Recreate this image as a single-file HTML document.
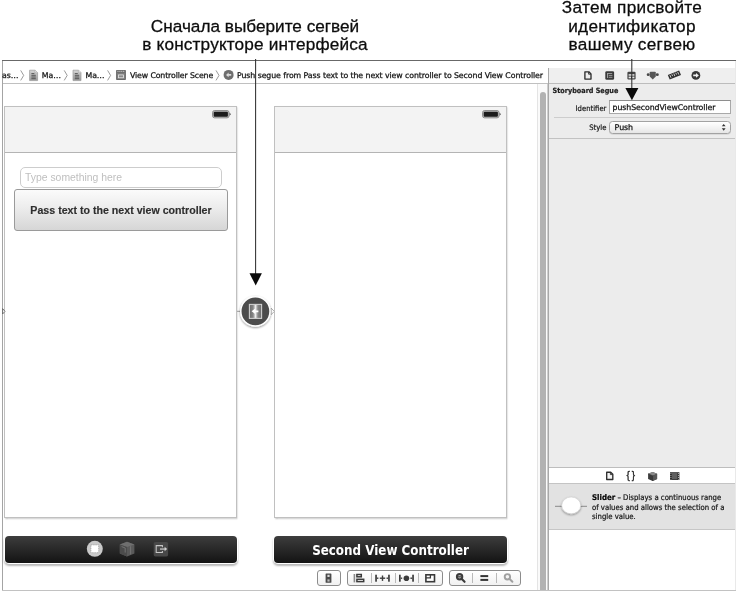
<!DOCTYPE html>
<html lang="ru">
<head>
<meta charset="utf-8">
<title>Storyboard Segue</title>
<style>
html,body{margin:0;padding:0;background:#fff;}
#root{position:absolute;left:0;top:0;width:736px;height:592px;will-change:transform;}
body{width:736px;height:592px;position:relative;overflow:hidden;font-family:"DejaVu Sans Condensed","Liberation Sans",sans-serif;color:#111;}
.abs{position:absolute;}
.cap{position:absolute;font-family:"Liberation Sans",sans-serif;font-size:17.2px;line-height:18.2px;text-align:center;color:#0c0c0c;-webkit-text-stroke:0.28px #0c0c0c;white-space:nowrap;}
.ui{font-family:"DejaVu Sans","Liberation Sans",sans-serif;font-size:7.8px;letter-spacing:-0.07px;white-space:nowrap;color:#111;-webkit-text-stroke:0.25px #111;}
.vc{position:absolute;top:106px;width:231px;height:410px;background:#fff;border:1px solid #c0c0c0;box-shadow:0.5px 1px 1.5px rgba(0,0,0,.24);}
.vc .nav{position:absolute;left:0;top:0;right:0;height:45px;background:#f3f3f3;border-bottom:1px solid #b4b4b4;}
.dock{position:absolute;top:536px;height:27px;width:233px;border-radius:4px;background:linear-gradient(#3d3d3d,#131313);box-shadow:0 0 0 1px #fff,0 2px 2px 1px rgba(0,0,0,.28);}
.bc{position:absolute;top:64.7px;height:22px;line-height:22px;}

.tf{left:15px;top:60px;width:196px;height:19px;border:1px solid #cdcdcd;border-radius:5px;background:#fff;font-family:"Liberation Sans",sans-serif;font-size:10.4px;line-height:19px;color:#bfbfbf;padding-left:4px;box-sizing:content-box;white-space:nowrap;}
.btn{left:9px;top:82px;width:212px;height:40px;border:1px solid #9a9a9a;border-radius:3px;background:linear-gradient(#fbfbfb,#ececec 45%,#d6d6d6);font-family:"Liberation Sans",sans-serif;font-weight:bold;font-size:10.64px;line-height:40.6px;color:#2e2e2e;-webkit-text-stroke:0.15px #2e2e2e;text-align:center;white-space:nowrap;}
.docktitle{position:absolute;left:0;right:0;top:0;height:27px;line-height:29.6px;text-align:center;color:#fff;font-weight:bold;font-size:13.25px;font-family:"DejaVu Sans Condensed","Liberation Sans",sans-serif;white-space:nowrap;}
.seg{position:absolute;top:570px;height:13.6px;border:1px solid #8c8c8c;border-radius:3px;background:linear-gradient(#ffffff,#f1f1f1);}
.lbl{position:absolute;font-family:"DejaVu Sans Condensed","Liberation Sans",sans-serif;font-size:7.6px;line-height:10px;white-space:nowrap;color:#1a1a1a;-webkit-text-stroke:0.2px #1a1a1a;}
</style>
</head>
<body>
<div id="root">

<!-- captions -->
<div class="cap" style="left:105px;width:300px;top:17.2px;">Сначала выберите сегвей<br><span style="letter-spacing:0.16px;">в конструкторе интерфейса</span></div>
<div class="cap" style="left:482px;width:300px;top:-1.6px;letter-spacing:0.3px;">Затем присвойте<br>идентификатор<br>вашему сегвею</div>

<!-- window frame -->
<div class="abs" style="left:2px;top:60px;width:734px;height:1px;background:#686868;"></div>
<div class="abs" style="left:2px;top:61px;width:1px;height:530px;background:#a4a4a4;"></div>
<div class="abs" style="left:2px;top:590px;width:734px;height:1px;background:#c2c2c2;z-index:6;"></div>
<div class="abs" style="left:735px;top:61px;width:1px;height:530px;background:#e9e9e9;z-index:5;"></div>

<!-- breadcrumb bar -->
<div class="abs" style="left:3px;top:83px;width:545px;height:1px;background:#c0c0c0;"></div>
<div id="crumbs">
<span class="ui bc" style="left:2px;">as…</span>
<span class="ui bc" style="left:41.8px;">Ma…</span>
<span class="ui bc" style="left:85.5px;">Ma…</span>
<span class="ui bc" style="left:130px;letter-spacing:-0.12px;">View Controller Scene</span>
<span class="ui bc" style="left:237px;">Push segue from Pass text to the next view controller to Second View Controller</span>
<svg class="abs" style="left:0;top:61px;" width="240" height="22" viewBox="0 0 240 22">
  <defs>
    <linearGradient id="dg" x1="0" x2="0" y1="0" y2="1"><stop offset="0" stop-color="#d6d6d6"/><stop offset="1" stop-color="#9a9a9a"/></linearGradient>
  </defs>
  <g transform="translate(20.7 9.4)"><path d="M0 0 L3 5 L0 10" fill="none" stroke="#8e8e8e" stroke-width="0.9"/></g>
  <g transform="translate(29.2 8.8)"><path d="M0.4 0.4 H6 L8.4 2.8 V10.8 H0.4 Z" fill="url(#dg)" stroke="#9a9a9a" stroke-width="0.7"/>
      <path d="M5.8 0.5 V3 H8.3" fill="#ececec" stroke="#9a9a9a" stroke-width="0.5"/>
      <path d="M2.2 3.8 H5.2 M2.2 5.5 H6.6 M2.2 7.2 H6.6 M2.2 8.9 H6.6" stroke="#444" stroke-width="0.85"/></g>
  <g transform="translate(64.2 9.4)"><path d="M0 0 L3 5 L0 10" fill="none" stroke="#8e8e8e" stroke-width="0.9"/></g>
  <g transform="translate(72.6 8.8)"><path d="M0.4 0.4 H6 L8.4 2.8 V10.8 H0.4 Z" fill="url(#dg)" stroke="#9a9a9a" stroke-width="0.7"/>
      <path d="M5.8 0.5 V3 H8.3" fill="#ececec" stroke="#9a9a9a" stroke-width="0.5"/>
      <path d="M2.2 3.8 H5.2 M2.2 5.5 H6.6 M2.2 7.2 H6.6 M2.2 8.9 H6.6" stroke="#444" stroke-width="0.85"/></g>
  <g transform="translate(107.6 9.4)"><path d="M0 0 L3 5 L0 10" fill="none" stroke="#8e8e8e" stroke-width="0.9"/></g>
  <!-- scene icon -->
  <rect x="116.1" y="8.9" width="9.8" height="10" rx="0.7" fill="#666"/>
  <rect x="117" y="11.6" width="8" height="6.5" fill="#7c7c7c"/>
  <rect x="118.5" y="13.9" width="5" height="2.9" fill="#8a8a8a" stroke="#e6e6e6" stroke-width="0.8"/>
  <path d="M117.4 10.3 H124.8" stroke="#e0e0e0" stroke-width="0.9" stroke-dasharray="1.2 0.7"/>
  <g transform="translate(216 9.4)"><path d="M0 0 L3 5 L0 10" fill="none" stroke="#8e8e8e" stroke-width="0.9"/></g>
  <!-- segue icon -->
  <circle cx="228.6" cy="13.9" r="5" fill="#6f6f6f"/>
  <path d="M226 13.9 L228.6 11.6 V13.1 H231.2 V14.7 H228.6 V16.2 Z" fill="#dcdcdc"/>
</svg>
</div>

<!-- canvas scrollbar -->
<div class="abs" style="left:537px;top:84px;width:11px;height:506px;background:#fafafa;border-left:1px solid #e4e4e4;border-right:1px solid #cfcfcf;box-sizing:border-box;"></div>
<div class="abs" style="left:540px;top:92px;width:6px;height:498px;border-radius:3px 3px 0 0;background:#b2b2b2;"></div>

<!-- view controllers -->
<div class="vc" style="left:4px;">
  <div class="nav"></div>
  <svg class="abs" style="left:207px;top:3px;" width="20" height="10" viewBox="0 0 20 10"><rect x="0.55" y="0.55" width="16.5" height="7.3" rx="2" fill="#bdbdbd" stroke="#8c8c8c" stroke-width="1"/><rect x="1.7" y="1.7" width="14.2" height="5" rx="1" fill="#1c1c1c"/><path d="M17.5 2.6 L19 4.2 L17.5 5.8 Z" fill="#5c5c5c"/></svg>
  <div class="abs tf">Type something here</div>
  <div class="abs btn">Pass text to the next view controller</div>
</div>
<div class="vc" style="left:274px;">
  <div class="nav"></div>
  <svg class="abs" style="left:207px;top:3px;" width="20" height="10" viewBox="0 0 20 10"><rect x="0.55" y="0.55" width="16.5" height="7.3" rx="2" fill="#bdbdbd" stroke="#8c8c8c" stroke-width="1"/><rect x="1.7" y="1.7" width="14.2" height="5" rx="1" fill="#1c1c1c"/><path d="M17.5 2.6 L19 4.2 L17.5 5.8 Z" fill="#5c5c5c"/></svg>
</div>

<!-- docks -->
<div class="dock" style="left:5px;width:232px;">
  <svg class="abs" style="left:77px;top:2px;" width="92" height="23" viewBox="0 0 92 23">
    <!-- first responder / view controller icon -->
    <circle cx="12.8" cy="10.8" r="8" fill="#c9c9c9"/>
    <rect x="8.9" y="6.9" width="7.8" height="7.8" fill="#fff" stroke="#8d8d8d" stroke-width="0.7" stroke-dasharray="1 0.8"/>
    <!-- cube -->
    <path d="M45 3.8 L52.4 6.4 L52.4 15.6 L45 18.6 L37.8 15.6 L37.8 6.4 Z" fill="#5a5a5a"/>
    <path d="M45 3.8 L52.4 6.4 L45 9 L37.8 6.4 Z" fill="#6f6f6f"/>
    <path d="M45 9 L45 18.6 L37.8 15.6 L37.8 6.4 Z" fill="#4b4b4b"/>
    <path d="M39.6 8.6 L43.2 10 L43.2 14.6" fill="none" stroke="#777" stroke-width="0.9"/>
    <path d="M48.6 8.2 L48.6 16.4" stroke="#777" stroke-width="0.9"/>
    <!-- exit -->
    <rect x="71.7" y="3.9" width="14.4" height="14.5" rx="1.6" fill="#484848"/>
    <path d="M80.4 9.2 V7.6 H74.2 V14.5 H80.4 V12.9" fill="none" stroke="#c6c6c6" stroke-width="1.05"/>
    <path d="M78 11.05 H83.2" stroke="#d2d2d2" stroke-width="1.2"/>
    <path d="M82.6 8.8 L85.1 11.05 L82.6 13.3 Z" fill="#d2d2d2"/>
  </svg>
</div>
<div class="dock" style="left:274px;"><div class="docktitle">Second View Controller</div></div>

<!-- entry arrow stub -->
<svg class="abs" style="left:0;top:304px;" width="8" height="14" viewBox="0 0 8 14"><path d="M2.6 4.6 L5 7.3 L2.6 10 Z" fill="#fff" stroke="#555" stroke-width="0.8"/></svg>

<!-- segue -->
<svg class="abs" style="left:230px;top:290px;" width="52" height="44" viewBox="0 0 52 44">
  <defs>
    <linearGradient id="sg" x1="0" x2="1" y1="0" y2="0"><stop offset="0" stop-color="#6c6c6c"/><stop offset="0.3" stop-color="#858585"/><stop offset="0.5" stop-color="#ededed"/><stop offset="0.7" stop-color="#858585"/><stop offset="1" stop-color="#6c6c6c"/></linearGradient>
    <filter id="sh" x="-30%" y="-30%" width="160%" height="170%"><feGaussianBlur in="SourceAlpha" stdDeviation="1.2"/><feOffset dy="1.2"/><feComponentTransfer><feFuncA type="linear" slope="0.45"/></feComponentTransfer><feMerge><feMergeNode/><feMergeNode in="SourceGraphic"/></feMerge></filter>
  </defs>
  <path d="M7 21.3 H10.5" stroke="#9a9a9a" stroke-width="1"/>
  <path d="M41 18 L44.4 21.4 L41 24.8 Z" fill="#fff" stroke="#a8a8a8" stroke-width="0.9"/>
  <circle cx="25.4" cy="21.4" r="14.6" fill="#4b4b4b" stroke="#fff" stroke-width="1.5" filter="url(#sh)"/>
  <rect x="19.4" y="14.4" width="12.2" height="14" fill="url(#sg)" stroke="#cfcfcf" stroke-width="1.1"/>
  <path d="M21.6 21.3 L25.2 18.6 V20.4 H28.4 V22.2 H25.2 V24 Z" fill="#fff"/>
</svg>

<!-- canvas bottom toolbar -->
<div class="seg" style="left:317px;width:22px;"></div>
<div class="seg" style="left:347px;width:94px;"></div>
<div class="seg" style="left:449px;width:70px;"></div>
<svg class="abs" style="left:310px;top:566px;" width="220" height="24" viewBox="0 0 220 24">
  <g fill="#3c3c3c" stroke="none">
    <!-- btn1 -->
    <rect x="15.6" y="7.4" width="5.8" height="9.4" rx="0.6" fill="#4a4a4a"/>
    <rect x="17.4" y="8.8" width="2.2" height="2.2" fill="#d8d8d8"/>
    <rect x="17.4" y="13.4" width="2.2" height="2.2" fill="#bdbdbd"/>
    <!-- align -->
    <rect x="43.6" y="8" width="1.6" height="8.4" fill="#8a8a8a"/>
    <rect x="46.9" y="8.5" width="4.4" height="2.3" fill="#fff" stroke="#3a3a3a" stroke-width="1.5"/>
    <rect x="46.9" y="13.3" width="6.8" height="2.3" fill="#fff" stroke="#3a3a3a" stroke-width="1.5"/>
    <!-- pin -->
    <rect x="65.2" y="8.7" width="1.7" height="7"/>
    <rect x="66.9" y="11.5" width="1.5" height="1.4"/>
    <rect x="78.1" y="8.7" width="1.7" height="7"/>
    <rect x="76.5" y="11.5" width="1.6" height="1.4"/>
    <rect x="69.8" y="11.5" width="5.4" height="1.4"/>
    <rect x="71.8" y="9.5" width="1.4" height="5.4"/>
    <!-- resolve -->
    <rect x="89" y="8.7" width="1.7" height="7"/>
    <rect x="90.7" y="11.5" width="1.5" height="1.4"/>
    <rect x="102.2" y="8.7" width="1.7" height="7"/>
    <rect x="100.4" y="11.5" width="1.8" height="1.4"/>
    <circle cx="96.4" cy="12.2" r="2.8"/>
    <!-- resize -->
    <rect x="115.9" y="8.8" width="8.6" height="6.9" fill="#fff" stroke="#3a3a3a" stroke-width="1.6"/>
    <path d="M115.9 11.9 H120.4 V8.8" fill="none" stroke="#3a3a3a" stroke-width="1.3"/>
  </g>
  <!-- dividers -->
  <g stroke="#b9b9b9" stroke-width="1">
    <path d="M61.5 7 V17"/><path d="M85.5 7 V17"/><path d="M108.5 7 V17"/>
    <path d="M162.5 7 V17"/><path d="M186.5 7 V17"/>
  </g>
  <!-- zoom out -->
  <circle cx="149.6" cy="10.8" r="2.7" fill="#b4b4b4" stroke="#3c3c3c" stroke-width="2"/>
  <path d="M151.8 13 L154.6 15.8" stroke="#3c3c3c" stroke-width="2.1" stroke-linecap="round"/>
  <path d="M148 10.8 H151.2" stroke="#3c3c3c" stroke-width="1"/>
  <!-- equals -->
  <rect x="170.4" y="9.1" width="7.8" height="2" fill="#333"/>
  <rect x="170.4" y="12.9" width="7.8" height="2" fill="#333"/>
  <!-- zoom in (disabled) -->
  <circle cx="197.4" cy="10.8" r="2.7" fill="#f4f4f4" stroke="#a0a0a0" stroke-width="1.9"/>
  <path d="M199.6 13 L202.4 15.8" stroke="#a0a0a0" stroke-width="2" stroke-linecap="round"/>
</svg>

<!-- inspector -->
<div id="insp" class="abs" style="left:548px;top:68px;width:187px;height:522px;background:#ececec;border-left:1px solid #a8a8a8;box-sizing:border-box;"></div>
<!-- inspector toolbar -->
<div class="abs" style="left:549px;top:68px;width:186px;height:15px;background:#efefef;"></div>
<div class="abs" style="left:549px;top:83px;width:186px;height:1px;background:#bcbcbc;"></div>
<svg class="abs" style="left:580px;top:68px;" width="126" height="16" viewBox="0 0 126 16">
  <!-- file -->
  <path d="M4.9 3.8 H8.9 L11 5.9 V11.1 H4.9 Z" fill="#ededed" stroke="#2e2e2e" stroke-width="1.35" stroke-linejoin="round"/>
  <path d="M8.6 4 V6.2 H10.9" fill="none" stroke="#2e2e2e" stroke-width="0.9"/>
  <!-- quick help -->
  <rect x="25.3" y="3.2" width="8.8" height="8.6" rx="1.4" fill="#3a3a3a"/>
  <path d="M27 5.5 H32.2 M28.8 7.4 H32.4 M28.8 9.3 H32.4" stroke="#a9a9a9" stroke-width="0.85"/>
  <path d="M27.6 5.2 V10" stroke="#a9a9a9" stroke-width="1"/>
  <!-- identity -->
  <rect x="47.4" y="3.8" width="8.2" height="7.6" rx="1.2" fill="#444"/>
  <rect x="48.6" y="6.2" width="5.8" height="1.5" fill="#e6e6e6"/>
  <rect x="48.6" y="8.6" width="2.4" height="1.7" fill="#e6e6e6"/>
  <rect x="52" y="8.6" width="2.4" height="1.7" fill="#e6e6e6"/>
  <!-- attributes -->
  <path d="M69.7 4.6 Q69.7 3.7 70.6 3.7 H74.9 Q75.8 3.7 75.8 4.6 V8.6 L72.75 11.6 L69.7 8.6 Z" fill="#575757"/>
  <ellipse cx="68.2" cy="6.7" rx="1.5" ry="1.35" fill="#484848"/>
  <ellipse cx="77.3" cy="6.7" rx="1.5" ry="1.35" fill="#484848"/>
  <!-- ruler -->
  <g transform="rotate(-22 94.4 7)">
    <rect x="88.3" y="4.5" width="12.2" height="5" fill="#2f2f2f"/>
    <path d="M90.2 5.4 V8.2 M92.3 5.4 V7.4 M94.4 5.4 V8.2 M96.5 5.4 V7.4 M98.6 5.4 V8.2" stroke="#e6e6e6" stroke-width="0.8"/>
  </g>
  <!-- connections -->
  <circle cx="115.9" cy="7.4" r="4.4" fill="#383838"/>
  <path d="M113.2 6.6 H116 V5 L118.9 7.4 L116 9.8 V8.2 H113.2 Z" fill="#f2f2f2"/>
</svg>
<!-- form -->
<div class="lbl" style="left:552.6px;top:86.3px;font-weight:bold;font-size:7.2px;color:#222;">Storyboard Segue</div>
<div class="lbl" style="left:549px;width:57.4px;text-align:right;top:103.7px;">Identifier</div>
<div class="abs" style="left:609px;top:100px;width:122px;height:14px;box-sizing:border-box;border:1px solid #a9a9a9;border-top-color:#8e8e8e;background:#fff;"></div>
<div class="ui abs" style="left:612.6px;top:102.2px;line-height:11px;">pushSecondViewController</div>
<div class="abs" style="left:554px;top:117px;width:176px;height:1px;background:#cdcdcd;"></div>
<div class="lbl" style="left:549px;width:57.4px;text-align:right;top:122.7px;">Style</div>
<div class="abs" style="left:609px;top:121px;width:122px;height:13px;box-sizing:border-box;border:1px solid #a2a2a2;border-radius:3.5px;background:linear-gradient(#ffffff,#f3f3f3 50%,#e6e6e6);box-shadow:0 0.5px 0.5px rgba(0,0,0,.15);"></div>
<div class="ui abs" style="left:614.6px;top:122.2px;line-height:11px;font-size:7.9px;">Push</div>
<svg class="abs" style="left:720px;top:122px;" width="8" height="11" viewBox="0 0 8 11"><path d="M1.8 4.3 L3.7 1.9 L5.6 4.3 Z M1.8 6.3 L3.7 8.7 L5.6 6.3 Z" fill="#333"/></svg>
<div class="abs" style="left:549px;top:138px;width:186px;height:1px;background:#c2c2c2;"></div>

<!-- library -->
<div class="abs" style="left:549px;top:467px;width:186px;height:1px;background:#bdbdbd;"></div>
<div class="abs" style="left:549px;top:468px;width:186px;height:15px;background:#fff;"></div>
<div class="abs" style="left:549px;top:483px;width:186px;height:1px;background:#c4c4c4;"></div>
<div class="abs" style="left:549px;top:484px;width:186px;height:45px;background:#e2e2e2;"></div>
<div class="abs" style="left:549px;top:529px;width:186px;height:1px;background:#c6c6c6;"></div>
<div class="abs" style="left:549px;top:530px;width:186px;height:60px;background:#fff;"></div>
<svg class="abs" style="left:600px;top:468px;" width="86" height="16" viewBox="0 0 86 16">
  <!-- file -->
  <path d="M6.7 4.2 H10.7 L12.8 6.3 V11.5 H6.7 Z" fill="#f4f4f4" stroke="#2e2e2e" stroke-width="1.35" stroke-linejoin="round"/>
  <path d="M10.4 4.4 V6.6 H12.7" fill="none" stroke="#2e2e2e" stroke-width="0.9"/>
  <!-- cube -->
  <path d="M52.6 4 L57.1 5.8 V10.9 L52.6 12.9 L48.1 10.9 V5.8 Z" fill="#3a3a3a"/>
  <path d="M52.6 4 L57.1 5.8 L52.6 7.7 L48.1 5.8 Z" fill="#8a8a8a"/>
  <path d="M52.6 7.7 L57.1 5.8 V10.9 L52.6 12.9 Z" fill="#585858"/>
  <path d="M48.1 5.8 L52.6 7.7 V12.9" fill="none" stroke="#2a2a2a" stroke-width="0.5"/>
  <!-- film -->
  <rect x="70" y="4.2" width="9.4" height="7.8" fill="#2f2f2f"/>
  <rect x="72" y="4.9" width="5.4" height="6.4" fill="#5e5e5e"/>
  <path d="M70.9 5 V11.6 M78.5 5 V11.6" stroke="#d8d8d8" stroke-width="0.8" stroke-dasharray="0.9 1.1"/>
</svg>
<div class="abs" style="left:626.4px;top:470.2px;font-family:'Liberation Sans',sans-serif;font-size:10px;line-height:12px;letter-spacing:1.9px;color:#222;-webkit-text-stroke:0.3px #222;white-space:nowrap;">{}</div>
<!-- slider icon -->
<svg class="abs" style="left:552px;top:492px;" width="40" height="28" viewBox="0 0 40 28">
  <defs>
    <filter id="ks" x="-30%" y="-30%" width="160%" height="180%"><feGaussianBlur in="SourceAlpha" stdDeviation="1"/><feOffset dy="1.2"/><feComponentTransfer><feFuncA type="linear" slope="0.4"/></feComponentTransfer><feMerge><feMergeNode/><feMergeNode in="SourceGraphic"/></feMerge></filter>
  </defs>
  <path d="M3 14.3 H35" stroke="#8a8a8a" stroke-width="1"/>
  <ellipse cx="19.2" cy="13.4" rx="9.5" ry="8.4" fill="#fff" stroke="#cfcfcf" stroke-width="0.6" filter="url(#ks)"/>
</svg>
<div class="lbl" style="left:592px;top:493.2px;font-size:7.7px;line-height:9.4px;color:#111;white-space:normal;width:144px;"><b style="font-size:7.85px;color:#000;">Slider</b> – Displays a continuous range<br>of values and allows the selection of a<br>single value.</div>

<!-- annotation arrows -->
<svg class="abs" style="left:0;top:0;" width="736" height="592" viewBox="0 0 736 592">
  <line x1="255.6" y1="59" x2="255.6" y2="275" stroke="#303030" stroke-width="1.05"/>
  <polygon points="249.5,273.2 261.9,273.2 255.7,285.4" fill="#0a0a0a"/>
  <line x1="631.8" y1="59" x2="631.8" y2="90" stroke="#303030" stroke-width="1.05"/>
  <polygon points="625.4,88 638.4,88 631.9,100.2" fill="#0a0a0a"/>
</svg>

</div>
</body>
</html>
